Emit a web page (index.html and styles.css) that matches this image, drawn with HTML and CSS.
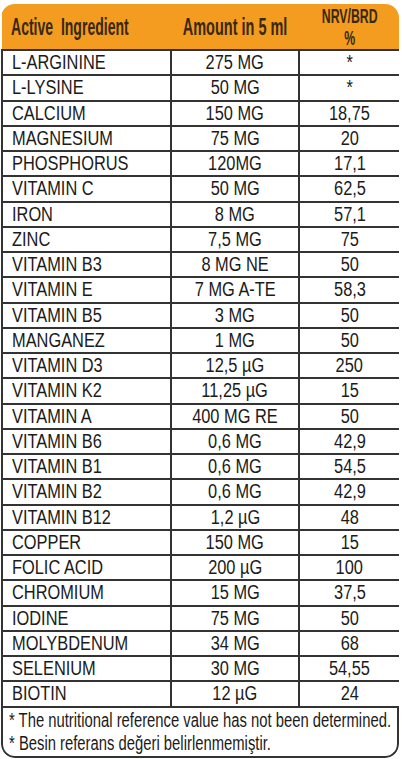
FILE: index.html
```html
<!DOCTYPE html>
<html lang="en">
<head>
  <meta charset="UTF-8">
  <title>Active Ingredients</title>
  <link rel="stylesheet" href="styles.css">
</head>
<body>
  <div class="card">
    <table class="facts">
      <colgroup>
        <col class="c-name">
        <col class="c-amount">
        <col class="c-nrv">
      </colgroup>
      <thead>
        <tr>
          <th class="name"><span class="t">Active&nbsp; Ingredient</span></th>
          <th class="amount"><span class="t">Amount in 5 ml</span></th>
          <th class="nrv"><span class="t">NRV/BRD<br>%</span></th>
        </tr>
      </thead>
      <tbody id="rows">
        <!-- rows filled by JS -->
      </tbody>
    </table>
    <div class="notes">
      <p><span class="t">* The nutritional reference value has not been determined.</span></p>
      <p><span class="t">* Besin referans değeri belirlenmemiştir.</span></p>
    </div>
  </div>

  <script>
    const data = [
      ["L-ARGININE", "275 MG", "*"],
      ["L-LYSINE", "50 MG", "*"],
      ["CALCIUM", "150 MG", "18,75"],
      ["MAGNESIUM", "75 MG", "20"],
      ["PHOSPHORUS", "120MG", "17,1"],
      ["VITAMIN C", "50 MG", "62,5"],
      ["IRON", "8 MG", "57,1"],
      ["ZINC", "7,5 MG", "75"],
      ["VITAMIN B3", "8 MG NE", "50"],
      ["VITAMIN E", "7 MG A-TE", "58,3"],
      ["VITAMIN B5", "3 MG", "50"],
      ["MANGANEZ", "1 MG", "50"],
      ["VITAMIN D3", "12,5 µG", "250"],
      ["VITAMIN K2", "11,25 µG", "15"],
      ["VITAMIN A", "400 MG RE", "50"],
      ["VITAMIN B6", "0,6 MG", "42,9"],
      ["VITAMIN B1", "0,6 MG", "54,5"],
      ["VITAMIN B2", "0,6 MG", "42,9"],
      ["VITAMIN B12", "1,2 µG", "48"],
      ["COPPER", "150 MG", "15"],
      ["FOLIC ACID", "200 µG", "100"],
      ["CHROMIUM", "15 MG", "37,5"],
      ["IODINE", "75 MG", "50"],
      ["MOLYBDENUM", "34 MG", "68"],
      ["SELENIUM", "30 MG", "54,55"],
      ["BIOTIN", "12 µG", "24"]
    ];

    const tbody = document.getElementById("rows");
    data.forEach(row => {
      const tr = document.createElement("tr");
      row.forEach((text, i) => {
        const td = document.createElement("td");
        const span = document.createElement("span");
        span.className = "t";
        span.textContent = text;
        td.appendChild(span);
        if (i === 0) td.className = "name";
        tr.appendChild(td);
      });
      tbody.appendChild(tr);
    });
  </script>
</body>
</html>
```

FILE: styles.css
```css
body {
  margin: 0;
  background: #fff;
  font-family: "Liberation Sans", Arial, sans-serif;
  color: #1b1b1b;
}

.card {
  width: 398px;
  margin: 4px 0 0 1px;
  border-radius: 14px;
  overflow: hidden;
}

/* the label uses a condensed face, so squeeze the text */
.t {
  display: inline-block;
  white-space: nowrap;
  margin: 0 -30px;
  transform: scaleX(0.84);
  transform-origin: center;
}

.facts {
  width: 100%;
  table-layout: fixed;
  border-collapse: collapse;
}

.c-name { width: 169px; }
.c-amount { width: 128px; }
.c-nrv { width: 101px; }

.facts th {
  background: #f39c1f;
  color: #3a2812;
  font-size: 23px;
  font-weight: bold;
  height: 44px;
  padding: 0;
  text-align: center;
  line-height: 24px;
}

.facts th.amount .t {
  transform: scaleX(0.63);
}

.facts th.name {
  text-align: left;
  padding-left: 9px;
}

.facts th.name .t {
  margin: 0;
  transform: scaleX(0.61);
  transform-origin: left center;
}

.facts th.nrv {
  font-size: 21px;
  line-height: 22px;
  padding-top: 1px;
}

.facts th.nrv .t {
  transform: scaleX(0.585);
}

.facts td {
  height: 23.25px;
  padding: 0;
  border: 2px solid #333;
  text-align: center;
  font-size: 19.5px;
  line-height: 21px;
}

.facts td.name {
  text-align: left;
  padding-left: 9px;
}

.facts td.name .t {
  margin: 0;
  transform-origin: left center;
}

.notes {
  border: 2px solid #333;
  border-top: none;
  border-radius: 0 0 14px 14px;
  padding: 1px 0 3px 6px;
  height: 44px;
}

.notes p {
  margin: 0;
  font-size: 19.5px;
  line-height: 23px;
}

.notes .t {
  margin: 0;
  transform: scaleX(0.76);
  transform-origin: left center;
}
```
